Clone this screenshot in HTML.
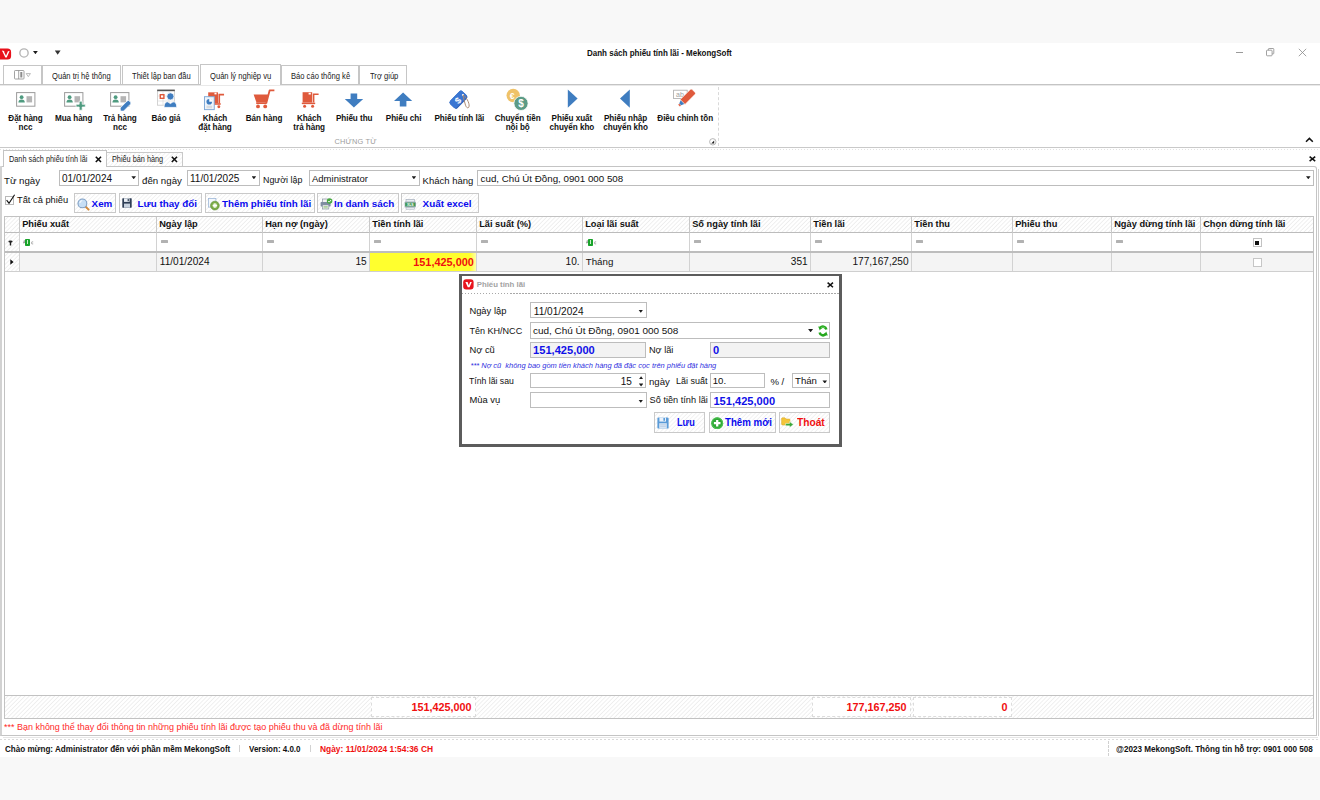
<!DOCTYPE html>
<html>
<head>
<meta charset="utf-8">
<title>Danh sách phiếu tính lãi - MekongSoft</title>
<style>
*{box-sizing:border-box;margin:0;padding:0}
html,body{width:1320px;height:800px;overflow:hidden;background:#f8f8f8;font-family:"Liberation Sans",sans-serif;color:#111}
.a{position:absolute;white-space:nowrap}
#win{position:absolute;left:0;top:43px;width:1320px;height:714px;background:#fff}
.t{position:absolute;white-space:nowrap;line-height:1;transform-origin:0 0}
.b{font-weight:bold}
.hatch{background-color:#fff;background-image:repeating-linear-gradient(135deg,#fff 0,#fff 1.3px,#ededed 2.2px,#fff 3px)}
.rt{position:absolute;top:22px;height:19px;border:1px solid #c6c6c6;border-bottom:none;background:#fff}
.rl{position:absolute;font-weight:bold;font-size:8.15px;line-height:9px;letter-spacing:-0.05px;text-align:center;color:#111;white-space:nowrap;transform:translateX(-50%)}
.inp{position:absolute;border:1px solid #bdbdbd;background:#fff}
.btn{position:absolute;border:1px solid #c9c9c9}
.btn.hatch{background-image:repeating-linear-gradient(135deg,#fff 0,#fff 1.3px,#f0f0f0 2.2px,#fff 3px)}
.btn .t{color:#0a0aee;font-weight:bold;font-size:10.6px}
.gh{position:absolute;top:0;height:16px;border-right:1px solid #c8c8c8}
.gh .t{left:2.2px;top:3.2px;font-weight:bold;font-size:9.25px;color:#111}
.gc{position:absolute;top:0;height:100%;border-right:1px solid #d2d2d2}
.eq{position:absolute;left:4.4px;top:7.4px;width:6.4px;height:2.6px;background:#b2b2b2;border-radius:0.5px}
.arr{position:absolute;width:4.6px;height:3.1px;background:#1c1c1c;clip-path:polygon(0 0,100% 0,50% 100%)}
</style>
</head>
<body>
<div id="win">

<!-- ===== title bar (win-relative: y = abs-43) ===== -->
<div id="titlebar" class="a" style="left:0;top:0;width:1320px;height:22px">
  <svg class="a" style="left:0;top:4.6px" width="12" height="12" viewBox="0 0 12 12"><rect x="-3" y="0.4" width="14.1" height="11.2" rx="3.6" fill="#e8111b"/><path d="M2.2 3.1l1.7.3 2.1 4.4 1.9-4.5 1.7-.2-2.9 6.4H5.3z" fill="#fff"/><path d="M1.9 2.6q1.6 0 2.6 1.2l-.9.6z" fill="#fff"/></svg>
  <svg class="a" style="left:18px;top:4px" width="12" height="12" viewBox="0 0 12 12"><circle cx="6" cy="5.95" r="4.15" fill="#fff" stroke="#b4b4b4" stroke-width="1.35"/></svg>
  <div class="arr" style="left:33px;top:8px;width:4.8px;height:3.2px"></div>
  <div class="arr" style="left:54.8px;top:7.4px;width:5.8px;height:4.4px;background:#333"></div>
  <div class="t b" style="left:587px;top:6.2px;font-size:9.2px;color:#111;transform:scaleX(.87)">Danh sách phiếu tính lãi - MekongSoft</div>
  <div class="a" style="left:1236px;top:9px;width:7px;height:1px;background:#9a9a9a"></div>
  <svg class="a" style="left:1266px;top:5px" width="9" height="9" viewBox="0 0 9 9" fill="none" stroke="#8a8a8a" stroke-width="0.8"><rect x="0.5" y="2.2" width="5.6" height="5.6" rx="0.8"/><path d="M2.4 2.2V1.2q0-.7.7-.7h4q.7 0 .7.7v4q0 .7-.7.7H6.2"/></svg>
  <svg class="a" style="left:1298px;top:5px" width="9" height="9" viewBox="0 0 9 9" fill="none" stroke="#8a8a8a" stroke-width="0.8"><path d="M0.8 0.8L8.2 8.2M8.2 0.8L0.8 8.2"/></svg>
</div>

<!-- ===== ribbon tabs ===== -->
<div class="a" style="left:0;top:41px;width:1320px;height:1px;background:#c4c4c4"></div><div class="a" style="left:0;top:42px;width:1320px;height:1px;background:#e9e9e9"></div>
<div class="rt" style="left:3px;width:39px"></div>
<svg class="a" style="left:14px;top:27px" width="18" height="10" viewBox="0 0 18 10" fill="none" stroke="#8c8c8c" stroke-width="0.8"><rect x="0.5" y="0.5" width="9.5" height="8.5" rx="0.8"/><path d="M4.7 0.5v8.5"/><rect x="6.3" y="2" width="2" height="5.5" fill="#8c8c8c" stroke="none"/><path d="M12.2 3.6h4.2l-2.1 3z" stroke-width="0.6"/></svg>
<div class="rt" style="left:42px;width:79px"><div class="t" style="left:9px;top:6.1px;font-size:8.45px;color:#222;transform:scaleX(.9)">Quản trị hệ thống</div></div>
<div class="rt" style="left:122px;width:77px"><div class="t" style="left:9px;top:6.1px;font-size:8.45px;color:#222;transform:scaleX(.9)">Thiết lập ban đầu</div></div>
<div class="rt" style="left:200px;width:81px;top:21px;height:21px;z-index:2"><div class="t" style="left:9px;top:7.1px;font-size:8.45px;color:#222;transform:scaleX(.9)">Quản lý nghiệp vụ</div></div>
<div class="rt" style="left:281px;width:78px"><div class="t" style="left:9px;top:6.1px;font-size:8.45px;color:#222;transform:scaleX(.9)">Báo cáo thống kê</div></div>
<div class="rt" style="left:359px;width:48px"><div class="t" style="left:10px;top:6.1px;font-size:8.45px;color:#222;transform:scaleX(.9)">Trợ giúp</div></div>

<!-- ===== ribbon body ===== -->
<svg class="a" style="left:16.2px;top:46.3px" width="26" height="22" viewBox="0 0 26 22"><rect x="0.6" y="3.6" width="18.3" height="13.6" fill="#fff" stroke="#9b9b9b" stroke-width="1"/><circle cx="5.6" cy="8.2" r="1.9" fill="#4f9b80"/><path d="M2.4 13.6q0-3 3.2-3t3.2 3z" fill="#4f9b80"/><rect x="10.5" y="7.2" width="5.6" height="6.2" fill="#b5b5b5"/></svg>
<svg class="a" style="left:64.3px;top:46.3px" width="26" height="22" viewBox="0 0 26 22"><rect x="0.6" y="3.6" width="18.3" height="13.6" fill="#fff" stroke="#9b9b9b" stroke-width="1"/><circle cx="5.6" cy="8.2" r="1.9" fill="#4f9b80"/><path d="M2.4 13.6q0-3 3.2-3t3.2 3z" fill="#4f9b80"/><rect x="10.5" y="7.2" width="5.6" height="6.2" fill="#b5b5b5"/><path d="M15.2 12.2h3v3.1h3.1v2.7h-3.1v3.2h-3v-3.2h-3.1v-2.7h3.1z" fill="#4f9b80" stroke="#fff" stroke-width="0.7"/></svg>
<svg class="a" style="left:110.4px;top:46.3px" width="26" height="22" viewBox="0 0 26 22"><rect x="0.6" y="3.6" width="18.3" height="13.6" fill="#fff" stroke="#9b9b9b" stroke-width="1"/><circle cx="5.6" cy="8.2" r="1.9" fill="#4f9b80"/><path d="M2.4 13.6q0-3 3.2-3t3.2 3z" fill="#4f9b80"/><rect x="10.5" y="7.2" width="5.6" height="6.2" fill="#b5b5b5"/><g transform="translate(11.8 20.6) rotate(-45)"><path d="M0 -2.3h10q1.6 0 1.6 2.3t-1.6 2.3H0l-2-2.3z" fill="#3f7dc0" stroke="#fff" stroke-width="0.7"/></g></svg>
<svg class="a" style="left:157px;top:46.2px" width="22" height="22" viewBox="0 0 22 22"><rect x="0.5" y="1.2" width="17" height="15" fill="#fff" stroke="#c9c9c9" stroke-width="0.8"/><rect x="0.2" y="0.6" width="17.6" height="1.6" fill="#555"/><path d="M0.5 7h17M0.5 12h17M6 2v14M12 2v14" stroke="#d6d6d6" stroke-width="0.6"/><rect x="2.6" y="5" width="5" height="5" fill="#df5a3c"/><rect x="4" y="6.4" width="2.2" height="2.2" fill="#fff"/><circle cx="13.4" cy="7.4" r="3.6" fill="#3f7dc0" stroke="#fff" stroke-width="0.8"/><path d="M7 18.4q0-5.6 3.8-5.6l2.6 1.8 2.6-1.8q3.8 0 3.8 5.6z" fill="#3f7dc0" stroke="#fff" stroke-width="0.8"/></svg>
<svg class="a" style="left:203px;top:46.4px" width="25" height="25" viewBox="0 0 24 24"><path d="M5 3.2h9.4v10.6H5z" fill="#df5a3c"/><rect x="11" y="3.6" width="2" height="1.6" fill="#fff"/><path d="M15.6 13.8V5.4h4.6" fill="none" stroke="#df5a3c" stroke-width="1.6"/><path d="M4 14.4h13" stroke="#df5a3c" stroke-width="1.5"/><circle cx="7.6" cy="17" r="1.4" fill="#df5a3c"/><circle cx="15.2" cy="17" r="1.4" fill="#df5a3c"/><rect x="1.4" y="7.4" width="9.4" height="12.4" fill="#eef4fb" stroke="#7da7d6" stroke-width="0.9"/><circle cx="6" cy="12.2" r="2.7" fill="#3f7dc0"/><path d="M6 12.2V9.3a2.9 2.9 0 0 1 2.9 2.9z" fill="#fff"/><path d="M3.4 16.6h5.4M3.4 18h5.4" stroke="#c9c9c9" stroke-width="0.7"/></svg>
<svg class="a" style="left:253px;top:45px" width="24" height="22" viewBox="0 0 24 22"><path d="M0.6 6.6h14.6l-1.6 7.6H3.4z" fill="#df5a3c"/><path d="M13.2 15.2H3.2M13.2 15.4l3.4-13h4.8" fill="none" stroke="#df5a3c" stroke-width="1.8" stroke-linejoin="round"/><circle cx="5" cy="18.4" r="1.9" fill="#df5a3c"/><circle cx="12.2" cy="18.4" r="1.9" fill="#df5a3c"/></svg>
<svg class="a" style="left:301px;top:46.4px" width="22" height="22" viewBox="0 0 22 22"><path d="M1.6 3.2h9.6v10.4H1.6z" fill="#df5a3c"/><rect x="7.6" y="3.8" width="2.2" height="1.7" fill="#fff"/><path d="M12.6 13.6V5.2h5" fill="none" stroke="#df5a3c" stroke-width="1.6"/><path d="M0.8 14.4h13.4" stroke="#df5a3c" stroke-width="1.5"/><circle cx="3.6" cy="17.2" r="1.5" fill="#df5a3c"/><circle cx="11.6" cy="17.2" r="1.5" fill="#df5a3c"/></svg>
<svg class="a" style="left:344.2px;top:49.5px" width="20" height="16" viewBox="0 0 20 16"><path d="M6.6 0.4h6.6v5.6h6L9.9 14.6 0.8 6h5.8z" fill="#3f7dc0"/></svg>
<svg class="a" style="left:393px;top:49px" width="20" height="16" viewBox="0 0 20 16"><path d="M6.8 14.4h6.6V9h5.8L10.1 0.6 1 9h5.8z" fill="#3f7dc0"/></svg>
<svg class="a" style="left:447px;top:45px" width="26" height="24" viewBox="0 0 26 24"><g transform="translate(11.4 11.8) rotate(-46)"><rect x="-8.8" y="-5.2" width="17.8" height="10.4" rx="2.4" fill="#2c5fb4"/><rect x="-8.8" y="-5.2" width="17.8" height="9.4" rx="2.4" fill="#3a76d2"/><circle cx="6.6" cy="0" r="1.1" fill="#fff"/><text x="-0.8" y="3.2" font-family="Liberation Sans, sans-serif" font-weight="bold" font-size="9" fill="#fff" text-anchor="middle">$</text></g><path d="M16 7C19 8.4 22.6 15 22.1 18.2C21.7 20.8 19.5 20.2 18.5 17.2C17.5 14.2 16.5 10 16 7" fill="none" stroke="#a9866e" stroke-width="0.95"/></svg>
<svg class="a" style="left:506px;top:44.6px" width="24" height="24" viewBox="0 0 24 24"><circle cx="7.2" cy="7.5" r="6.7" fill="#efc268"/><text x="6.2" y="10.6" font-family="Liberation Sans, sans-serif" font-weight="bold" font-size="8.6" fill="#fff" text-anchor="middle">€</text><circle cx="15" cy="15.4" r="7.1" fill="#5c9b86" stroke="#fff" stroke-width="0.8"/><text x="15" y="19" font-family="Liberation Sans, sans-serif" font-weight="bold" font-size="10" fill="#fff" text-anchor="middle">$</text></svg>
<svg class="a" style="left:567px;top:46px" width="12" height="20" viewBox="0 0 12 20"><path d="M0.8 0.4L10.6 9.6 0.8 18.8z" fill="#3f7dc0"/></svg>
<svg class="a" style="left:619px;top:46px" width="12" height="20" viewBox="0 0 12 20"><path d="M10.8 0.4L1 9.6 10.8 18.8z" fill="#3f7dc0"/></svg>
<svg class="a" style="left:672px;top:44px" width="26" height="20" viewBox="0 0 26 20"><rect x="1.6" y="3.2" width="13.6" height="8.4" fill="#fff" stroke="#a9a9a9" stroke-width="0.8"/><text x="4" y="10" font-family="Liberation Sans, sans-serif" font-size="7" fill="#a0a0a0">ab</text><g transform="translate(8.2 17.4) rotate(-45)"><path d="M3.4 -3.4h14.2q1.4 0 1.4 1.4v4q0 1.4-1.4 1.4H3.4z" fill="#df5a3c" stroke="#fff" stroke-width="0.6"/><path d="M3.2 -2.6L0 -1.3v2.6l3.2 1.3z" fill="#3f7dc0"/><path d="M-0.2 -1.2h-1.4v2.4h1.4z" fill="#df5a3c"/></g></svg>
<div class="rl" style="left:25.5px;top:70.8px">Đặt hàng<br>ncc</div><div class="rl" style="left:73.7px;top:70.8px">Mua hàng</div><div class="rl" style="left:120px;top:70.8px">Trả hàng<br>ncc</div><div class="rl" style="left:166px;top:70.8px">Báo giá</div><div class="rl" style="left:215px;top:70.8px">Khách<br>đặt hàng</div><div class="rl" style="left:264px;top:70.8px">Bán hàng</div><div class="rl" style="left:309.2px;top:70.8px">Khách<br>trả hàng</div><div class="rl" style="left:354.2px;top:70.8px">Phiếu thu</div><div class="rl" style="left:403.6px;top:70.8px">Phiếu chi</div><div class="rl" style="left:459.4px;top:70.8px">Phiếu tính lãi</div><div class="rl" style="left:517.7px;top:70.8px">Chuyển tiền<br>nội bộ</div><div class="rl" style="left:571.9px;top:70.8px">Phiếu xuất<br>chuyển kho</div><div class="rl" style="left:625.6px;top:70.8px">Phiếu nhập<br>chuyển kho</div><div class="rl" style="left:685.2px;top:70.8px">Điều chỉnh tồn</div>
<div class="t" style="left:334.6px;top:95px;font-size:7.4px;color:#9d9d9d;letter-spacing:0.15px">CHỨNG TỪ</div>
<div class="a" style="left:718px;top:44px;width:0;height:59px;border-left:1px dashed #d9d9d9"></div>
<svg class="a" style="left:709px;top:95px" width="8" height="8" viewBox="0 0 8 8"><circle cx="3.8" cy="3.8" r="3.2" fill="#fff" stroke="#9a9a9a" stroke-width="0.7"/><path d="M5.2 2.4v3H2.2z" fill="#222"/></svg>
<svg class="a" style="left:1305px;top:94px" width="9" height="6" viewBox="0 0 9 6" fill="none" stroke="#111" stroke-width="1.5"><path d="M1 4.8L4.4 1.4 7.8 4.8"/></svg>
<div class="a" style="left:0;top:104px;width:1320px;height:1px;background:#c9c9c9"></div>
<div class="a" style="left:0;top:106px;width:1320px;height:1px;background-image:repeating-linear-gradient(90deg,#e2e2e2 0,#e2e2e2 1px,#fff 1px,#fff 3px)"></div>

<!-- ===== document tabs ===== -->
<div class="a" style="left:0;top:123px;width:1317px;height:570px;border:1px solid #c4c4c4;border-left:2px solid #d2d2d2;border-radius:0 3px 0 0"></div>
<div class="a" style="left:1318px;top:126px;width:1px;height:567px;background:#cfcfcf"></div>
<div class="a" style="left:3px;top:107px;width:104px;height:17px;border:1px solid #c4c4c4;border-bottom:none;background:#fff"></div>
<div class="t" style="left:9px;top:112.7px;font-size:8.25px;color:#222;transform:scaleX(.885)">Danh sách phiếu tính lãi</div>
<svg class="a" style="left:95px;top:113px" width="7" height="7" viewBox="0 0 7 7" stroke="#111" stroke-width="1.6"><path d="M0.8 0.8L6 6M6 0.8L0.8 6"/></svg>
<div class="a btn hatch" style="left:107px;top:109px;width:76px;height:14px;border:1px solid #c9c9c9;border-bottom:none;border-left:none"></div>
<div class="t" style="left:112px;top:112.7px;font-size:8.25px;color:#222;transform:scaleX(.885)">Phiếu bán hàng</div>
<svg class="a" style="left:171px;top:113px" width="7" height="7" viewBox="0 0 7 7" stroke="#111" stroke-width="1.6"><path d="M0.8 0.8L6 6M6 0.8L0.8 6"/></svg>
<svg class="a" style="left:1309px;top:113px" width="7" height="6" viewBox="0 0 7 6" stroke="#111" stroke-width="1.5"><path d="M0.6 0.6L6.2 5.2M6.2 0.6L0.6 5.2"/></svg>

<!-- ===== filter bar ===== -->
<div class="t" style="left:4px;top:133px;font-size:9.7px">Từ ngày</div>
<div class="inp" style="left:59px;top:127px;width:80px;height:16px"><div class="t" style="left:2px;top:2.5px;font-size:10px">01/01/2024</div><div class="arr" style="left:71.4px;top:5.2px"></div></div>
<div class="t" style="left:142px;top:133px;font-size:9.7px">đến ngày</div>
<div class="inp" style="left:187px;top:127px;width:73px;height:16px"><div class="t" style="left:2px;top:2.5px;font-size:10px">11/01/2025</div><div class="arr" style="left:63.6px;top:5.2px"></div></div>
<div class="t" style="left:263px;top:133px;font-size:8.9px">Người lập</div>
<div class="inp" style="left:309px;top:127px;width:111px;height:16px"><div class="t" style="left:2px;top:2.5px;font-size:9.5px">Administrator</div><div class="arr" style="left:101.6px;top:5.2px"></div></div>
<div class="t" style="left:422.6px;top:132.5px;font-size:9.5px">Khách hàng</div>
<div class="inp" style="left:477px;top:127px;width:837px;height:16px"><div class="t" style="left:2.6px;top:2.5px;font-size:9.75px">cud, Chú Út Đồng, 0901 000 508</div><div class="arr" style="left:828px;top:5.2px"></div></div>

<div class="a" style="left:5px;top:153px;width:9px;height:9px;border:1px solid #b9b9b9;background:#fff"></div>
<svg class="a" style="left:5px;top:151px" width="11" height="11" viewBox="0 0 11 11" fill="none" stroke="#111" stroke-width="1.1"><path d="M1.6 6.2L4 9.2 9.6 0.8"/></svg>
<div class="t" style="left:17px;top:153px;font-size:9.3px">Tất cả phiếu</div>

<div class="btn hatch" style="left:74px;top:150px;width:42px;height:20px"><div class="t" style="left:16.6px;top:4.7px;font-size:9.8px">Xem</div>
 <svg class="a" style="left:1.6px;top:3.6px" width="13" height="13" viewBox="0 0 13 13"><path d="M8.2 8.2L11.6 11.6" stroke="#d28a3c" stroke-width="2" stroke-linecap="round"/><circle cx="5.4" cy="5.4" r="4.4" fill="#c7dff5" stroke="#7f9fc4" stroke-width="1.1"/><path d="M2.8 5a2.8 2.8 0 0 1 2.4-2.4" fill="none" stroke="#fff" stroke-width="1"/></svg></div>
<div class="btn hatch" style="left:119px;top:150px;width:83px;height:20px"><div class="t" style="left:17.6px;top:4.7px;font-size:9.8px">Lưu thay đổi</div>
 <svg class="a" style="left:2.4px;top:4.2px" width="10" height="10" viewBox="0 0 10 10"><rect x="0.3" y="0.3" width="9.4" height="9.4" rx="0.6" fill="#2f3e55"/><rect x="2" y="0.3" width="5.6" height="3.6" fill="#e9eef4"/><rect x="2" y="5.6" width="6" height="4.1" fill="#c9d3df"/><rect x="5.6" y="0.9" width="1.3" height="2.3" fill="#3b4a5e"/></svg></div>
<div class="btn hatch" style="left:205px;top:150px;width:110px;height:20px"><div class="t" style="left:16px;top:4.7px;font-size:9.8px">Thêm phiếu tính lãi</div>
 <svg class="a" style="left:2.4px;top:3.6px" width="13" height="13" viewBox="0 0 13 13"><rect x="0.5" y="0.5" width="7.4" height="8.6" fill="#f4f8fd" stroke="#9fb7d8" stroke-width="0.8"/><circle cx="6.9" cy="7.6" r="4.4" fill="#7bab48" stroke="#5f8f35" stroke-width="0.6"/><circle cx="6.9" cy="7.6" r="2.4" fill="#cfe3b6"/><path d="M6.9 5.6v4M4.9 7.6h4" stroke="#fff" stroke-width="1.2"/></svg></div>
<div class="btn hatch" style="left:317px;top:150px;width:82px;height:20px"><div class="t" style="left:16px;top:4.7px;font-size:9.9px">In danh sách</div>
 <svg class="a" style="left:2px;top:4px" width="13" height="12" viewBox="0 0 13 12"><rect x="2.6" y="1" width="6" height="3.4" fill="#f2f2f2" stroke="#8a94a3" stroke-width="0.7"/><rect x="0.6" y="4" width="10" height="4.6" rx="0.8" fill="#7f8da1"/><rect x="2.4" y="7" width="6.4" height="4" fill="#fff" stroke="#8a94a3" stroke-width="0.7"/><path d="M3.4 8.6h4.4M3.4 9.8h4.4" stroke="#6aa84f" stroke-width="0.6"/><circle cx="9.6" cy="3" r="2.8" fill="#49a942"/><path d="M8.2 3l1 1.1 1.8-2.1" fill="none" stroke="#fff" stroke-width="0.9"/></svg></div>
<div class="btn hatch" style="left:401px;top:150px;width:78px;height:20px"><div class="t" style="left:20.6px;top:4.7px;font-size:9.9px">Xuất excel</div>
 <svg class="a" style="left:2px;top:5px" width="13" height="11" viewBox="0 0 13 11"><rect x="2" y="0.4" width="8.6" height="3" fill="#e9edf2" stroke="#9aa5b4" stroke-width="0.6"/><rect x="0.6" y="2.6" width="11.4" height="6" rx="1" fill="#a9b4c2"/><rect x="1.2" y="3.6" width="10.2" height="3.8" fill="#3f9a55"/><text x="6.3" y="6.8" font-family="Liberation Sans, sans-serif" font-size="3.4" font-weight="bold" fill="#fff" text-anchor="middle">XLS</text><rect x="2" y="8.4" width="8.6" height="1.8" fill="#e9edf2" stroke="#9aa5b4" stroke-width="0.5"/></svg></div>

<!-- ===== grid ===== -->
<div id="grid" class="a" style="left:4px;top:173px;width:1310px;height:503px;border:1px solid #c2c2c2;background:#fff">
<div class="a hatch" style="left:0;top:0;width:1308px;height:16px;border-bottom:1px solid #bcbcbc">
<div class="gh" style="left:0px;width:15px"></div>
<div class="gh" style="left:15px;width:137px"><div class="t">Phiếu xuất</div></div>
<div class="gh" style="left:152px;width:106px"><div class="t">Ngày lập</div></div>
<div class="gh" style="left:258px;width:107px"><div class="t">Hạn nợ (ngày)</div></div>
<div class="gh" style="left:365px;width:107px"><div class="t">Tiền tính lãi</div></div>
<div class="gh" style="left:472px;width:106px"><div class="t">Lãi suất (%)</div></div>
<div class="gh" style="left:578px;width:107px"><div class="t">Loại lãi suất</div></div>
<div class="gh" style="left:685px;width:121px"><div class="t">Số ngày tính lãi</div></div>
<div class="gh" style="left:806px;width:101px"><div class="t">Tiền lãi</div></div>
<div class="gh" style="left:907px;width:101px"><div class="t">Tiền thu</div></div>
<div class="gh" style="left:1008px;width:99px"><div class="t">Phiếu thu</div></div>
<div class="gh" style="left:1107px;width:89px"><div class="t">Ngày dừng tính lãi</div></div>
<div class="gh" style="left:1196px;width:112px;border-right:none"><div class="t">Chọn dừng tính lãi</div></div>
</div>
<div class="a" style="left:0;top:16px;width:1308px;height:20px;border-bottom:2px solid #bdbdbd;background:#fff">
<div class="gc hatch" style="left:0px;width:15px"><svg class="a" style="left:3px;top:6.6px" width="5" height="6" viewBox="0 0 5 6"><path d="M0.4 1.4q0-1 2.1-1t2.1 1q0 .9-1.4 1.2v2.8H1.8V2.6Q.4 2.3.4 1.4z" fill="#222"/></svg></div>
<div class="gc" style="left:15px;width:137px"><svg class="a" style="left:2.6px;top:7.2px" width="3" height="4" viewBox="0 0 3 4"><path d="M0.2 3.6L1.3 0.4 2.4 3.6M0.7 2.5h1.3" fill="none" stroke="#808080" stroke-width="0.6"/></svg><div class="a" style="left:5.2px;top:5.8px;width:4.8px;height:6.8px;background:#19a32b;border-radius:0.8px"></div><div class="a" style="left:6.7px;top:7.4px;width:1.8px;height:3.6px;background:#c9efc9"></div><svg class="a" style="left:10.6px;top:7.6px" width="3" height="4" viewBox="0 0 3 4"><path d="M2.2 0.9q-1.8-.6-1.8 1t1.8 1" fill="none" stroke="#808080" stroke-width="0.6"/></svg></div>
<div class="gc" style="left:152px;width:106px"><div class="eq"></div></div>
<div class="gc" style="left:258px;width:107px"><div class="eq"></div></div>
<div class="gc" style="left:365px;width:107px"><div class="eq"></div></div>
<div class="gc" style="left:472px;width:106px"><div class="eq"></div></div>
<div class="gc" style="left:578px;width:107px"><svg class="a" style="left:2.6px;top:7.2px" width="3" height="4" viewBox="0 0 3 4"><path d="M0.2 3.6L1.3 0.4 2.4 3.6M0.7 2.5h1.3" fill="none" stroke="#808080" stroke-width="0.6"/></svg><div class="a" style="left:5.2px;top:5.8px;width:4.8px;height:6.8px;background:#19a32b;border-radius:0.8px"></div><div class="a" style="left:6.7px;top:7.4px;width:1.8px;height:3.6px;background:#c9efc9"></div><svg class="a" style="left:10.6px;top:7.6px" width="3" height="4" viewBox="0 0 3 4"><path d="M2.2 0.9q-1.8-.6-1.8 1t1.8 1" fill="none" stroke="#808080" stroke-width="0.6"/></svg></div>
<div class="gc" style="left:685px;width:121px"><div class="eq"></div></div>
<div class="gc" style="left:806px;width:101px"><div class="eq"></div></div>
<div class="gc" style="left:907px;width:101px"><div class="eq"></div></div>
<div class="gc" style="left:1008px;width:99px"><div class="eq"></div></div>
<div class="gc" style="left:1107px;width:89px"><div class="eq"></div></div>
<div class="gc" style="left:1196px;width:112px;border-right:none"><div class="a" style="left:51.5px;top:5px;width:9px;height:9px;border:1px solid #c2c2c2;background:#fff"></div><div class="a" style="left:54px;top:7.5px;width:4.2px;height:4.2px;background:#111"></div></div>
</div>
<div class="a" style="left:0;top:36px;width:1308px;height:19px;border-bottom:1px solid #cfcfcf;background:#f4f4f4">
<div class="gc hatch" style="left:0px;width:15px"><svg class="a" style="left:5px;top:6px" width="4" height="6" viewBox="0 0 4 6"><path d="M0.3 0.2L3.6 3 0.3 5.8z" fill="#111"/></svg></div>
<div class="gc" style="left:15px;width:137px"></div>
<div class="gc" style="left:152px;width:106px"><div class="t" style="left:2.8px;top:4px;font-size:10.1px;color:#111">11/01/2024</div></div>
<div class="gc" style="left:258px;width:107px"><div class="t" style="right:2.4px;top:4px;font-size:10.1px;color:#111">15</div></div>
<div class="gc" style="left:365px;width:107px;background:linear-gradient(90deg,#ffff2e 0,#ffff2e 94%,#ffffa8 100%)"><div class="t b" style="right:2.2px;top:3.6px;font-size:10.9px;color:#f01010">151,425,000</div></div>
<div class="gc" style="left:472px;width:106px"><div class="t" style="right:2.4px;top:4px;font-size:10.1px;color:#111">10.</div></div>
<div class="gc" style="left:578px;width:107px"><div class="t" style="left:2.8px;top:4px;font-size:9.7px;color:#111">Tháng</div></div>
<div class="gc" style="left:685px;width:121px"><div class="t" style="right:2.4px;top:4px;font-size:10.1px;color:#111">351</div></div>
<div class="gc" style="left:806px;width:101px"><div class="t" style="right:2.4px;top:4px;font-size:10.1px;color:#111">177,167,250</div></div>
<div class="gc" style="left:907px;width:101px"></div>
<div class="gc" style="left:1008px;width:99px"></div>
<div class="gc" style="left:1107px;width:89px"></div>
<div class="gc" style="left:1196px;width:112px;border-right:none"><div class="a" style="left:51.5px;top:5px;width:9px;height:9px;border:1px solid #c6c6c6;background:#fff"></div></div>
</div>
<div class="a hatch" style="left:0;top:478px;width:1308px;height:23px;border-top:1px solid #c2c2c2">
<div class="a" style="left:366px;top:1px;width:105px;height:20px;border:1px dashed #dcdcdc;background:#fff"><div class="t b" style="right:3.5px;top:4px;font-size:10.8px;color:#f01010">151,425,000</div></div>
<div class="a" style="left:807px;top:1px;width:99px;height:20px;border:1px dashed #dcdcdc;background:#fff"><div class="t b" style="right:3.5px;top:4px;font-size:10.8px;color:#f01010">177,167,250</div></div>
<div class="a" style="left:908px;top:1px;width:99px;height:20px;border:1px dashed #dcdcdc;background:#fff"><div class="t b" style="right:3.5px;top:4px;font-size:10.8px;color:#f01010">0</div></div>
</div>
</div>
<div class="t" style="left:4px;top:680px;font-size:8.98px;color:#ff2a2a">*** Bạn không thể thay đổi thông tin những phiếu tính lãi được tạo phiếu thu và đã dừng tính lãi</div>
<!-- ===== dialog ===== -->
<div class="a" style="left:459px;top:230.5px;width:382.6px;height:173.3px;background:#5c5c5c;z-index:9"></div>
<div id="dlg" class="a" style="left:461.8px;top:233.3px;width:377px;height:167.7px;background:#fff;z-index:10">
<svg class="a" style="left:0.8px;top:3.1px" width="11" height="11" viewBox="0 0 11 11"><rect x="0.2" y="0.2" width="10.4" height="10.2" rx="3" fill="#e8141c"/><path d="M2.4 2.9h2.2l1.2 3.7 1.3-3.7h1.7L6.5 8.3H4.8z" fill="#fff"/></svg>
<div class="t" style="left:14.9px;top:5.0px;font-size:7.8px;font-weight:bold;color:#a2a2a2">Phiếu tính lãi</div>
<svg class="a" style="left:365.0px;top:5.7px" width="7" height="6" viewBox="0 0 7 6" stroke="#111" stroke-width="1.5"><path d="M0.6 0.6L6 5.2M6 0.6L0.6 5.2"/></svg>
<div class="a" style="left:0;top:16.9px;width:377px;height:1px;background-image:repeating-linear-gradient(90deg,#a8a8a8 0,#a8a8a8 1.5px,#fff 1.5px,#fff 3px)"></div>
<div class="t" style="left:7.6px;top:30.2px;font-size:9.4px;">Ngày lập</div>
<div class="inp" style="left:68.7px;top:25.9px;width:116.2px;height:16.3px;background:#fff"><div class="t" style="left:2.3px;top:3.5px;font-size:10.1px">11/01/2024</div><div class="arr" style="left:107px;top:6.5px"></div></div>
<div class="t" style="left:7.6px;top:50.7px;font-size:9.05px;">Tên KH/NCC</div>
<div class="inp" style="left:68.7px;top:46.2px;width:299.3px;height:16.6px;background:#fff"><div class="t" style="left:1.6px;top:2.4px;font-size:9.95px">cud, Chú Út Đồng, 0901 000 508</div><div class="arr" style="left:276.6px;top:5.6px;width:5px"></div><svg class="a" style="left:287px;top:1.6px" width="10" height="12" viewBox="0 0 10 12"><path d="M8.4 4.6A3.5 3.9 0 0 0 2.2 3.2" fill="none" stroke="#27a81f" stroke-width="2.5"/><path d="M0.2 1.6l4.2.2-2.6 3.6z" fill="#27a81f"/><path d="M1.6 7.4A3.5 3.9 0 0 0 7.8 8.8" fill="none" stroke="#27a81f" stroke-width="2.5"/><path d="M9.8 10.4l-4.2-.2 2.6-3.6z" fill="#27a81f"/><path d="M3 2.6q2-1.2 4 .2" fill="none" stroke="#7be070" stroke-width="0.7"/></svg></div>
<div class="t" style="left:7.6px;top:69.2px;font-size:9.4px;">Nợ cũ</div>
<div class="inp" style="left:68.7px;top:65.3px;width:115.3px;height:16.3px;background:#f3f3f3"><div class="t b" style="left:1.6px;top:2.4px;font-size:11.1px;color:#1010e8">151,425,000</div></div>
<div class="t" style="left:187.2px;top:69.7px;font-size:9.2px;">Nợ lãi</div>
<div class="inp" style="left:248.4px;top:65.3px;width:119.6px;height:16.3px;background:#f3f3f3"><div class="t b" style="left:1.8px;top:2.4px;font-size:11.1px;color:#1010e8">0</div></div>
<div class="t" style="left:8.7px;top:86.0px;font-size:7.48px;font-style:italic;color:#3030e0">*** Nợ cũ &nbsp;không bao gồm tiền khách hàng đã đặc cọc trên phiếu đặt hàng</div>
<div class="t" style="left:7.6px;top:99.3px;font-size:9.4px;transform:scaleX(.925)">Tính lãi sau</div>
<div class="inp" style="left:68.7px;top:96.6px;width:115.3px;height:15.5px;background:#fff"><div class="t" style="right:13px;top:3px;font-size:10px">15</div><div class="arr" style="left:107.3px;top:2.4px;clip-path:polygon(0 100%,100% 100%,50% 0)"></div><div class="arr" style="left:107.3px;top:9.6px"></div></div>
<div class="t" style="left:187.2px;top:100.5px;font-size:9.6px;">ngày</div>
<div class="t" style="left:214.2px;top:100.5px;font-size:9.0px;">Lãi suất</div>
<div class="inp" style="left:248.4px;top:96.6px;width:54.5px;height:15.5px;background:#fff"><div class="t" style="left:1.6px;top:2.4px;font-size:9.6px">10.</div></div>
<div class="t" style="left:308.6px;top:100.5px;font-size:9.6px;">% /</div>
<div class="inp" style="left:330.7px;top:96.6px;width:37.3px;height:15.5px;background:#fff"><div class="t" style="left:1.6px;top:2.6px;font-size:9.6px">Thán</div><div class="arr" style="left:29px;top:6.5px"></div></div>
<div class="t" style="left:7.6px;top:119.0px;font-size:9.4px;">Mùa vụ</div>
<div class="inp" style="left:68.7px;top:115.9px;width:116.2px;height:15.6px;background:#fff"><div class="arr" style="left:107px;top:6.5px"></div></div>
<div class="t" style="left:187.8px;top:119.9px;font-size:9.2px;">Số tiền tính lãi</div>
<div class="inp" style="left:248.4px;top:115.9px;width:119.6px;height:15.6px;background:#fff"><div class="t b" style="left:2.2px;top:2.4px;font-size:11.1px;color:#1010e8">151,425,000</div></div>
<div class="btn hatch" style="left:192.5px;top:135.3px;width:51.2px;height:21px"><svg class="a" style="left:1.6px;top:4px" width="12" height="12" viewBox="0 0 12 12"><rect x="0.4" y="0.4" width="11.2" height="11.2" rx="1.2" fill="#5a9bd8"/><rect x="2.4" y="0.4" width="6.6" height="4.2" fill="#eaf2fb"/><rect x="6.4" y="1" width="1.6" height="2.8" fill="#5a9bd8"/><rect x="2.2" y="6.2" width="7.6" height="5.4" fill="#d9e6f4"/><path d="M3.2 7.8h5.6M3.2 9.4h5.6" stroke="#a9c2de" stroke-width="0.6"/></svg><div class="t" style="left:22px;top:5.6px;font-size:10.4px;transform:scaleX(.88)">Lưu</div></div>
<div class="btn hatch" style="left:247.2px;top:135.3px;width:67px;height:21px"><svg class="a" style="left:1.2px;top:4px" width="12.4" height="12.4" viewBox="0 0 12 12"><circle cx="6" cy="6" r="5.8" fill="#2fa836"/><circle cx="6" cy="6" r="5.2" fill="none" stroke="#58c95c" stroke-width="0.8"/><path d="M4.9 2.8h2.2v2.1h2.1v2.2H7.1v2.1H4.9V7.1H2.8V4.9h2.1z" fill="#fff"/></svg><div class="t" style="left:15.4px;top:5.6px;font-size:10.4px;transform:scaleX(.935)">Thêm mới</div></div>
<div class="btn hatch" style="left:317.2px;top:135.3px;width:51.2px;height:21px"><svg class="a" style="left:1.4px;top:4.6px" width="13" height="11" viewBox="0 0 13 11"><path d="M0.6 1.6q0-.8.8-.8h2.6l1 1.2h3.2q.8 0 .8.8v4.4q0 .8-.8.8H1.4q-.8 0-.8-.8z" fill="#f3c53a" stroke="#d9a520" stroke-width="0.5"/><path d="M4.6 6.4h4V4.6l3.8 3-3.8 3V8.8h-4z" fill="#3aa83a" stroke="#fff" stroke-width="0.5"/></svg><div class="t" style="left:17.2px;top:5.6px;font-size:10.4px;color:#f01010;transform:scaleX(.98)">Thoát</div></div>
</div>
<!-- ===== status bar ===== -->
<div class="a" style="left:0;top:696px;width:1320px;height:1px;background-image:repeating-linear-gradient(90deg,#d9d9d9 0,#d9d9d9 2px,#fff 2px,#fff 4px)"></div>
<div class="a" style="left:3px;top:694px;width:1315px;height:1px;background:#e6e6e6"></div>
<div class="t b" style="left:5px;top:701.8px;font-size:9.29px;color:#111;transform:scaleX(.87)">Chào mừng: Administrator đến với phần mềm MekongSoft</div>
<div class="a" style="left:239px;top:702px;width:1px;height:7px;background:#d2d2d2"></div>
<div class="t b" style="left:249px;top:701.8px;font-size:9.20px;color:#111;transform:scaleX(.87)">Version: 4.0.0</div>
<div class="a" style="left:310px;top:702px;width:1px;height:7px;background:#d2d2d2"></div>
<div class="t b" style="left:320px;top:701.4px;font-size:9.66px;color:#f01010;transform:scaleX(.87)">Ngày: 11/01/2024 1:54:36 CH</div>
<div class="a" style="left:1108px;top:698px;width:0;height:15px;border-left:1px dashed #d0d0d0"></div>
<div class="t b" style="left:1116px;top:701.8px;font-size:9.34px;color:#111;transform:scaleX(.87)">@2023 MekongSoft. Thông tin hỗ trợ: 0901 000 508</div>


</div>
</body>
</html>
